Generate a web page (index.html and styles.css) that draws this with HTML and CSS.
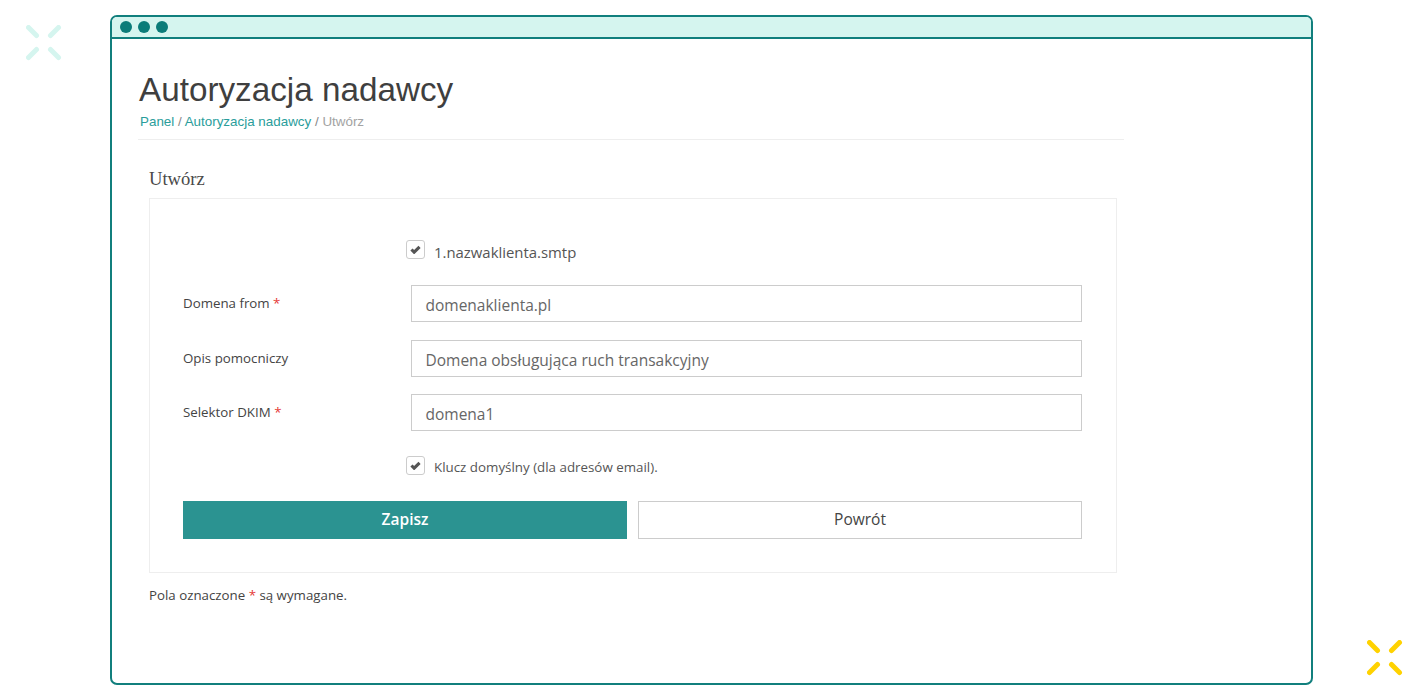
FILE: index.html
```html
<!DOCTYPE html>
<html lang="pl">
<head>
<meta charset="utf-8">
<title>Autoryzacja nadawcy</title>
<link rel="stylesheet" href="styles.css">
</head>
<body>
<svg class="spark spark-top" viewBox="0 0 36 36" aria-hidden="true"><path d="M2.5 2.5 L10.5 10.5 M32.5 2.5 L24.5 10.5 M2.5 32.5 L10.5 24.5 M32.5 32.5 L24.5 24.5"/></svg>
<svg class="spark spark-bottom" viewBox="0 0 36 36" aria-hidden="true"><path d="M2.5 2.5 L10.5 10.5 M32.5 2.5 L24.5 10.5 M2.5 32.5 L10.5 24.5 M32.5 32.5 L24.5 24.5"/></svg>
<div class="window">
  <div class="titlebar"><span class="dot"></span><span class="dot"></span><span class="dot"></span></div>
  <main class="content">
    <header class="page-head">
      <h1>Autoryzacja nadawcy</h1>
      <div class="crumbs"><a>Panel</a> / <a>Autoryzacja nadawcy</a> / <span class="current">Utwórz</span></div>
    </header>
    <section class="section">
      <h2>Utwórz</h2>
      <form class="card">
        <div class="check-row top">
          <span class="check"><svg viewBox="0 0 12 10"><path d="M1.5 5 L4.5 8 L10.5 2"/></svg></span>
          <span class="check-big">1.nazwaklienta.smtp</span>
        </div>
        <div class="field"><label>Domena from <i>*</i></label><div class="input">domenaklienta.pl</div></div>
        <div class="field"><label>Opis pomocniczy</label><div class="input">Domena obsługująca ruch transakcyjny</div></div>
        <div class="field"><label>Selektor DKIM <i>*</i></label><div class="input">domena1</div></div>
        <div class="check-row bottom">
          <span class="check"><svg viewBox="0 0 12 10"><path d="M1.5 5 L4.5 8 L10.5 2"/></svg></span>
          <span class="check-small">Klucz domyślny (dla adresów email).</span>
        </div>
        <div class="actions">
          <div class="btn primary">Zapisz</div>
          <div class="btn">Powrót</div>
        </div>
      </form>
      <p class="note">Pola oznaczone <i>*</i> są wymagane.</p>
    </section>
  </main>
</div>
</body>
</html>
```
FILE: styles.css
```css
* { box-sizing: border-box; }
html, body { margin: 0; height: 100%; }
body {
  background: #fff;
  padding: 15px 110px 14px 110px;
  font-family: "Open Sans", sans-serif;
  overflow: hidden;
}
.spark { position: absolute; width: 36px; height: 36px; }
.spark path { fill: none; stroke-width: 5px; stroke-linecap: round; }
.spark-top { left: 26px; top: 25px; }
.spark-top path { stroke: #d5f5ef; }
.spark-bottom { left: 1367px; top: 640px; }
.spark-bottom path { stroke: #ffd200; }
.window {
  height: 670px;
  border: 2px solid #117f7d;
  border-radius: 7px;
  background: #fff;
  display: flex;
  flex-direction: column;
}
.titlebar {
  height: 22px;
  flex: none;
  background: #d5f5ef;
  border-bottom: 2px solid #117f7d;
  border-radius: 5px 5px 0 0;
  display: flex;
  align-items: center;
  gap: 6px;
  padding: 0 0 1px 8px;
}
.dot { width: 12px; height: 12px; border-radius: 50%; background: #0b7c79; }
.content { padding: 32px 0 0 26px; width: 1012px; }
.page-head { border-bottom: 1px solid #eee; height: 69px; }
h1 {
  margin: 0 0 0 1px;
  font: 400 33.25px/38px "Liberation Sans", Arial, sans-serif;
  color: #3f3f3f;
}
.crumbs {
  margin: 5px 0 0 2px;
  font: 13.4px/16px "Liberation Sans", Arial, sans-serif;
  color: #888;
}
.crumbs a { color: #2a9d9b; }
.crumbs .current { color: #a3a3a3; }
.section { padding: 28px 0 0 11px; width: 979px; }
h2 {
  margin: 0 0 8px;
  font: 400 18.6px/22px "Liberation Serif", serif;
  color: #4a4a4a;
}
.card {
  border: 1px solid #eee;
  height: 375px;
  padding: 40px 34px 0 33px;
  display: flex;
  flex-direction: column;
}
.check-row { display: flex; align-items: center; margin-left: 223px; }
.check-row.top { height: 24px; }
.check-row.bottom { height: 24px; margin-top: 24px; }
.check {
  width: 19px; height: 19px;
  border: 1px solid #ccc;
  border-radius: 3px;
  display: flex; align-items: center; justify-content: center;
  margin: -3px 9px 0 0;
}
.check svg { width: 11px; height: 9px; }
.check path { fill: none; stroke: #555; stroke-width: 3.4px; }
.check-big { font-size: 14.9px; color: #555; margin-top: 2px; }
.check-small { font: 13.35px/20px "Open Sans", sans-serif; color: #555; }
.field { display: flex; margin-bottom: 17px; }
.check-row.top + .field { margin-top: 22px; margin-bottom: 18px; }
.field:nth-of-type(4) { margin-bottom: 0; }
.field label {
  width: 228px;
  padding-top: 8px;
  font: 13.3px/20px "Open Sans", sans-serif;
  color: #444;
}
.field label i, .note i { color: #e53935; font-style: normal; }
.input {
  flex: 1;
  height: 37px;
  border: 1px solid #ccc;
  padding: 0 13.5px;
  font-size: 15.5px;
  line-height: 39px;
  color: #666;
}
.actions { display: flex; gap: 11px; margin-top: 22px; }
.btn {
  flex: 1;
  height: 38px;
  border: 1px solid #ccc;
  font-size: 15.5px;
  line-height: 34px;
  text-align: center;
  color: #444;
}
.btn.primary { background: #2b9391; border-color: #2b9391; color: #fff; font-weight: 600; }
.note {
  margin: 13px 0 0;
  font: 13.3px/18px "Open Sans", sans-serif;
  color: #444;
}
```
